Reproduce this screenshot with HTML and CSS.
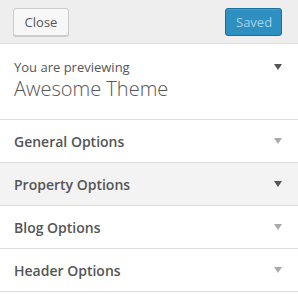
FILE: index.html
```html
<!DOCTYPE html>
<html>
<head>
<meta charset="utf-8">
<link rel="stylesheet" href="styles.css">
</head>
<body>
<div class="panel">
  <div class="header">
    <button class="btn btn-close">Close</button>
    <button class="btn btn-saved">Saved</button>
  </div>
  <div class="theme">
    <div class="theme-text">
      <div class="preview-label">You are previewing</div>
      <div class="theme-name">Awesome Theme</div>
    </div>
    <span class="arrow dark"></span>
  </div>
  <div class="row"><span class="row-title">General Options</span><span class="arrow"></span></div>
  <div class="row active"><span class="row-title">Property Options</span><span class="arrow dark"></span></div>
  <div class="row"><span class="row-title">Blog Options</span><span class="arrow"></span></div>
  <div class="row"><span class="row-title">Header Options</span><span class="arrow"></span></div>
</div>
</body>
</html>
```

FILE: styles.css
```css
html, body {
  margin: 0;
  padding: 0;
  background: #fff;
}
body {
  font-family: "Open Sans", "Liberation Sans", sans-serif;
  color: #555;
}
.panel {
  width: 298px;
}
.header {
  height: 43px;
  box-sizing: border-box;
  background: #eee;
  border-bottom: 1px solid #ddd;
  display: flex;
  justify-content: space-between;
  align-items: flex-start;
  padding: 8px 16px 0 13px;
  height: 44px;
}
.btn {
  font-family: "Open Sans", "Liberation Sans", sans-serif;
  font-size: 13px;
  height: 28px;
  box-sizing: border-box;
  border-radius: 3px;
  padding: 0 10px;
  line-height: 26px;
  margin: 0;
}
.btn-close {
  width: 56px;
  background: #f7f7f7;
  border: 1px solid #ccc;
  color: #555;
  box-shadow: 0 1px 0 #ccc;
}
.btn-saved {
  width: 57px;
  background: #2e8fc1;
  border: 1px solid #1c6f9a;
  color: #a8d3ea;
  box-shadow: inset 0 1px 0 rgba(120,200,230,0.3);
}
.theme {
  height: 76px;
  box-sizing: border-box;
  border-bottom: 1px solid #ddd;
  display: flex;
  justify-content: space-between;
  align-items: flex-start;
  padding: 14px 16px 0 14px;
}
.preview-label {
  font-size: 13px;
  line-height: 18px;
  color: #555;
}
.theme-name {
  font-size: 20px;
  line-height: 26px;
  font-weight: 300;
  color: #555;
}
.theme .arrow {
  margin-top: 6px;
}
.row {
  height: 43px;
  box-sizing: border-box;
  border-bottom: 1px solid #ddd;
  display: flex;
  justify-content: space-between;
  align-items: center;
  padding: 0 16px 0 14px;
  background: #fff;
}
.row.active {
  background: #f3f3f3;
}
.row-title {
  font-size: 14px;
  font-weight: 600;
  color: #555;
}
.arrow {
  width: 0;
  height: 0;
  border-left: 4px solid transparent;
  border-right: 4px solid transparent;
  border-top: 6px solid #aaa;
}
.arrow.dark {
  border-top-color: #555;
}
```
